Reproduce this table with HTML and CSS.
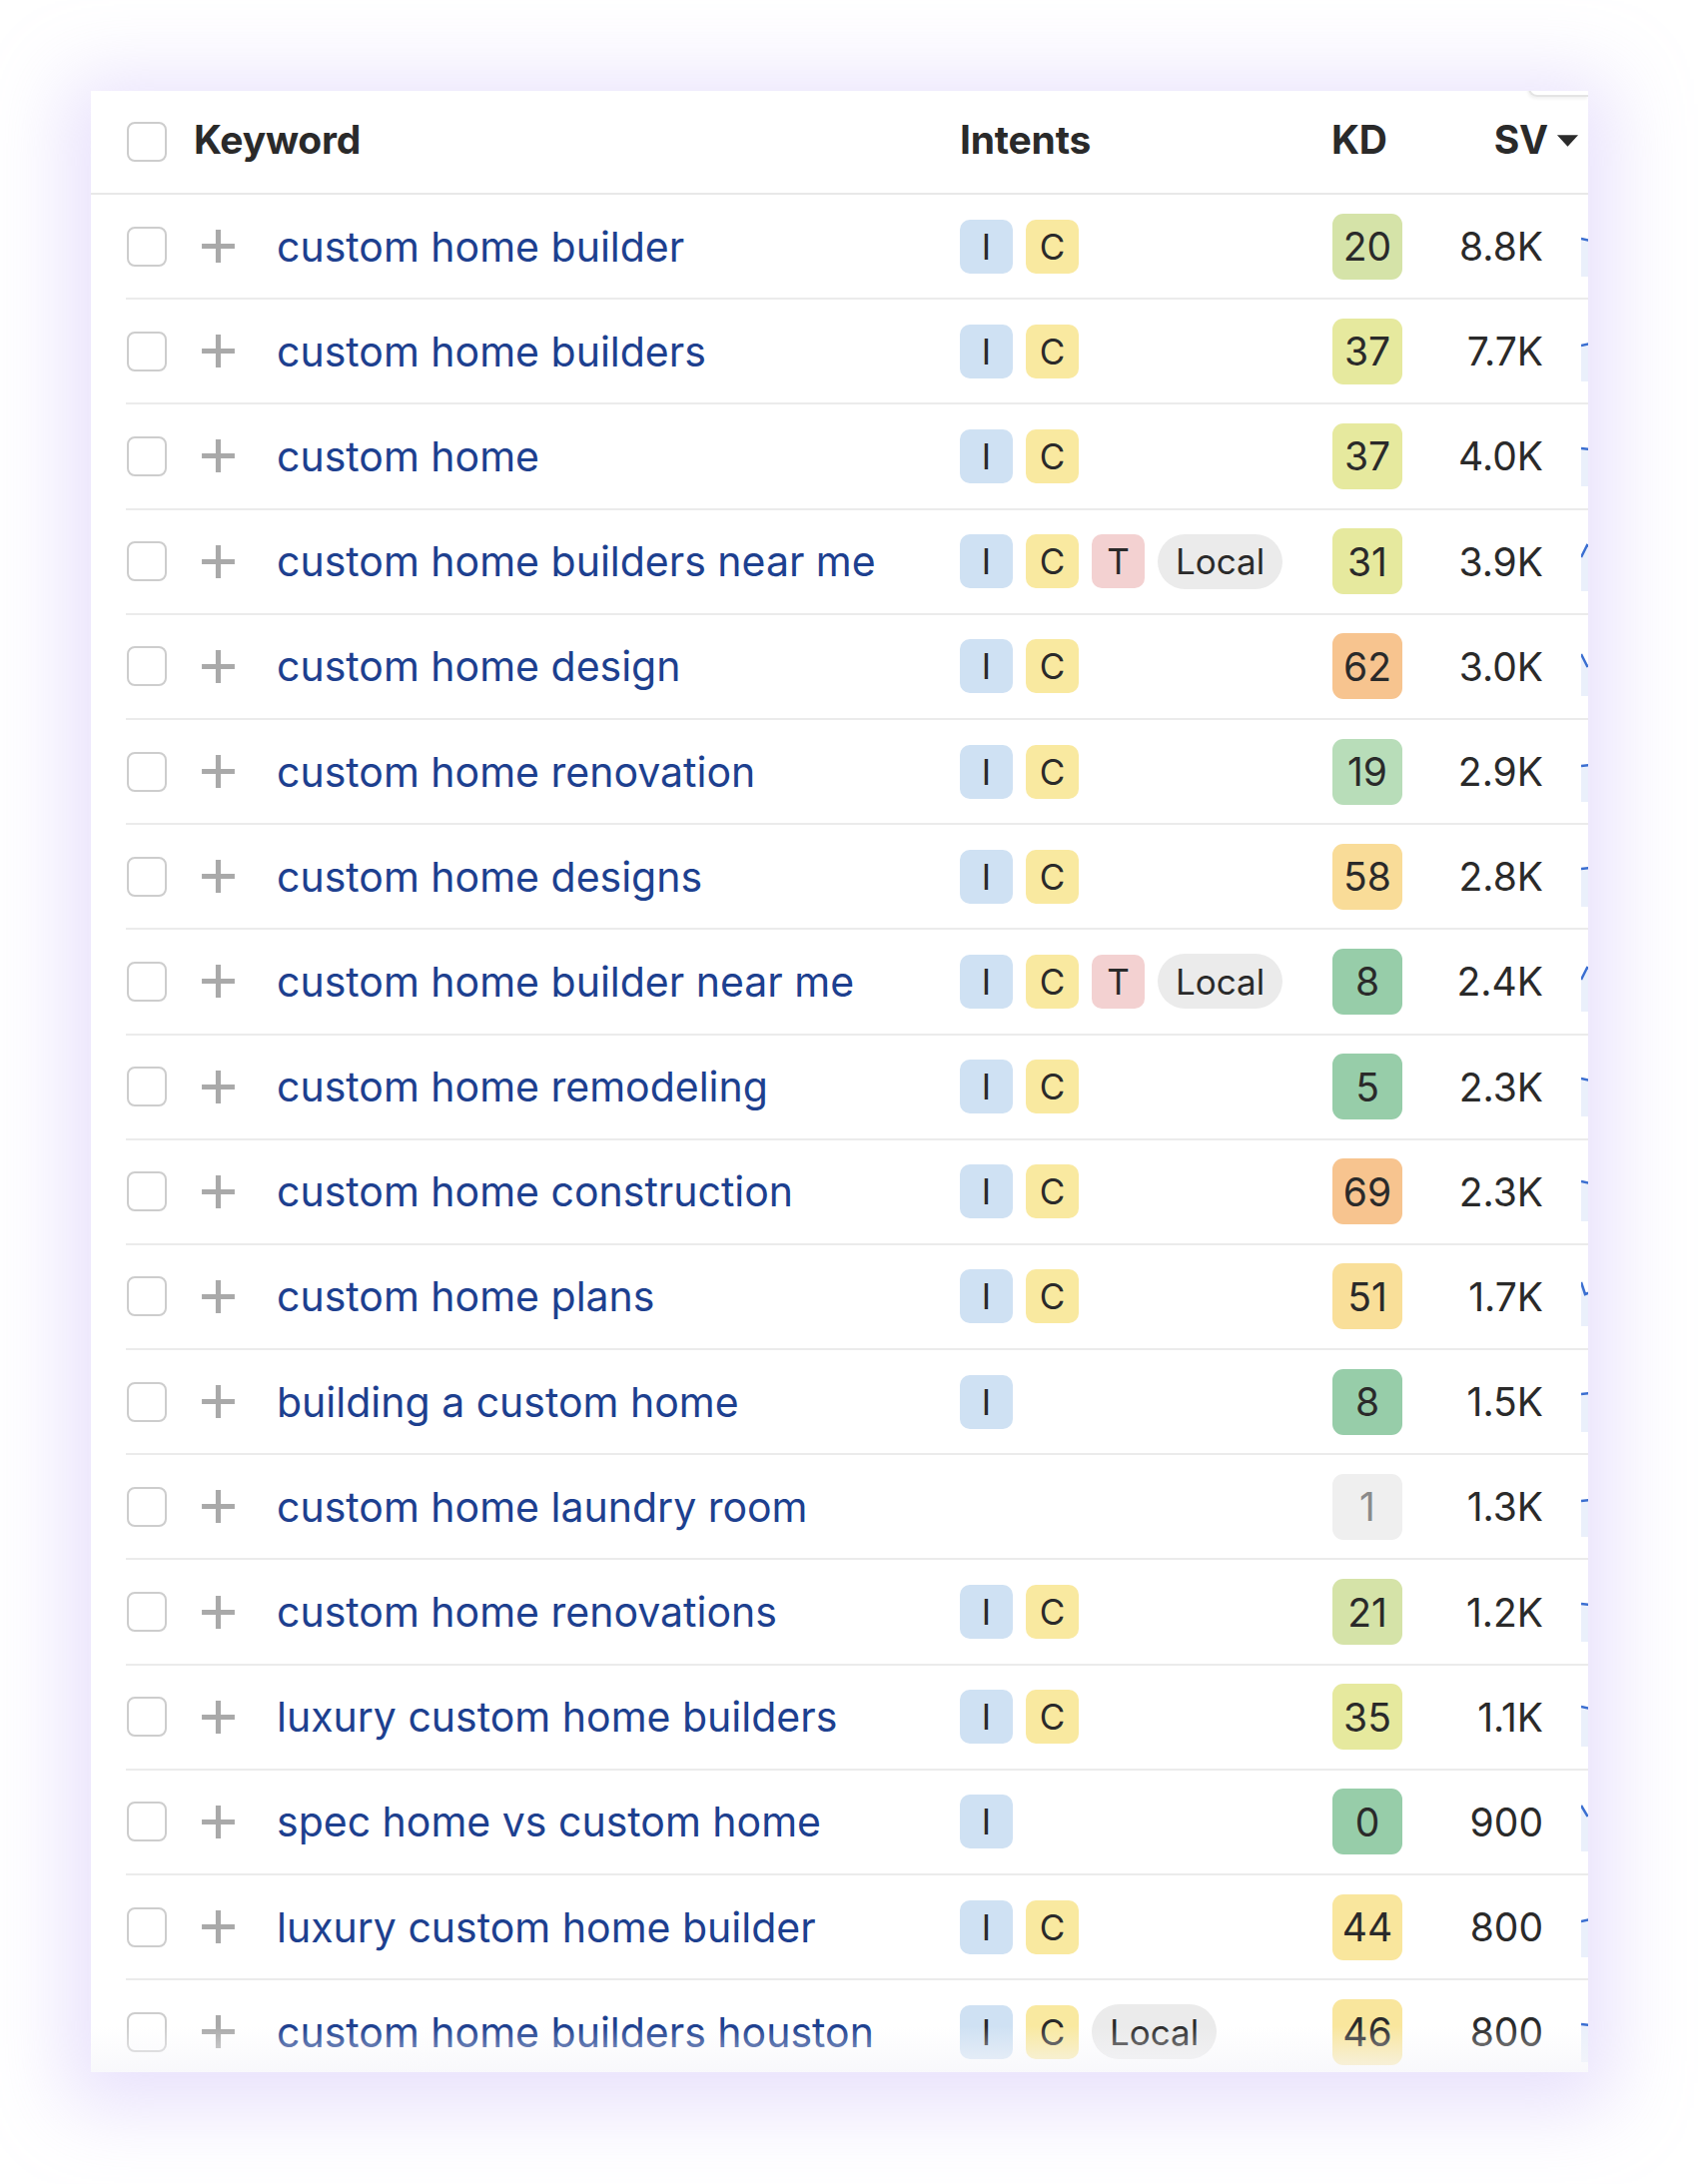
FILE: index.html
```html
<!DOCTYPE html>
<html lang="en">
<head>
<meta charset="utf-8">
<title>Keywords</title>
<link rel="stylesheet" href="styles.css">
</head>
<body>
<div class="card">
  <div class="corner-tab"></div>
  <div class="head">
    <span class="cb"></span>
    <span class="h-txt">Keyword</span>
    <span class="h-txt">Intents</span>
    <span class="h-txt">KD</span>
    <span class="h-txt h-sv">SV<svg class="sort" viewBox="0 0 24 14" width="24" height="14"><path d="M1 1h22L12 13z" fill="#2b2b2b"/></svg></span>
  </div>
  <div class="rows">
    <div class="row"><span class="cb"></span><svg class="plus" viewBox="0 0 36 36"><path d="M18 2v32M2 18h32"/></svg><span class="kw">custom home builder</span><span class="intents"><b class="it it-i">I</b><b class="it it-c">C</b></span><span class="kd kd-b">20</span><span class="sv">8.8K</span><span class="trend"><svg viewBox="0 0 120 50"><path class="area" d="M0 12L20 16L40 8L60 20L80 10L100 14L120 6V50H0z"/><path class="line" d="M0 12L20 16L40 8L60 20L80 10L100 14L120 6"/></svg></span></div>
    <div class="row"><span class="cb"></span><svg class="plus" viewBox="0 0 36 36"><path d="M18 2v32M2 18h32"/></svg><span class="kw">custom home builders</span><span class="intents"><b class="it it-i">I</b><b class="it it-c">C</b></span><span class="kd kd-c">37</span><span class="sv">7.7K</span><span class="trend"><svg viewBox="0 0 120 50"><path class="area" d="M0 14L20 10L40 18L60 8L80 16L100 12L120 9V50H0z"/><path class="line" d="M0 14L20 10L40 18L60 8L80 16L100 12L120 9"/></svg></span></div>
    <div class="row"><span class="cb"></span><svg class="plus" viewBox="0 0 36 36"><path d="M18 2v32M2 18h32"/></svg><span class="kw">custom home</span><span class="intents"><b class="it it-i">I</b><b class="it it-c">C</b></span><span class="kd kd-c">37</span><span class="sv">4.0K</span><span class="trend"><svg viewBox="0 0 120 50"><path class="area" d="M0 12L20 14L40 10L60 18L80 8L100 12L120 10V50H0z"/><path class="line" d="M0 12L20 14L40 10L60 18L80 8L100 12L120 10"/></svg></span></div>
    <div class="row"><span class="cb"></span><svg class="plus" viewBox="0 0 36 36"><path d="M18 2v32M2 18h32"/></svg><span class="kw">custom home builders near me</span><span class="intents"><b class="it it-i">I</b><b class="it it-c">C</b><b class="it it-t">T</b><b class="it it-local">Local</b></span><span class="kd kd-c">31</span><span class="sv">3.9K</span><span class="trend"><svg viewBox="0 0 120 50"><path class="area" d="M0 16L6 4L20 12L40 8L60 16L80 6L100 12L120 10V50H0z"/><path class="line" d="M0 16L6 4L20 12L40 8L60 16L80 6L100 12L120 10"/></svg></span></div>
    <div class="row"><span class="cb"></span><svg class="plus" viewBox="0 0 36 36"><path d="M18 2v32M2 18h32"/></svg><span class="kw">custom home design</span><span class="intents"><b class="it it-i">I</b><b class="it it-c">C</b></span><span class="kd kd-e">62</span><span class="sv">3.0K</span><span class="trend"><svg viewBox="0 0 120 50"><path class="area" d="M0 8L6 20L20 14L40 10L60 18L80 12L100 8L120 14V50H0z"/><path class="line" d="M0 8L6 20L20 14L40 10L60 18L80 12L100 8L120 14"/></svg></span></div>
    <div class="row"><span class="cb"></span><svg class="plus" viewBox="0 0 36 36"><path d="M18 2v32M2 18h32"/></svg><span class="kw">custom home renovation</span><span class="intents"><b class="it it-i">I</b><b class="it it-c">C</b></span><span class="kd kd-a2">19</span><span class="sv">2.9K</span><span class="trend"><svg viewBox="0 0 120 50"><path class="area" d="M0 14L20 12L40 16L60 10L80 14L100 8L120 12V50H0z"/><path class="line" d="M0 14L20 12L40 16L60 10L80 14L100 8L120 12"/></svg></span></div>
    <div class="row"><span class="cb"></span><svg class="plus" viewBox="0 0 36 36"><path d="M18 2v32M2 18h32"/></svg><span class="kw">custom home designs</span><span class="intents"><b class="it it-i">I</b><b class="it it-c">C</b></span><span class="kd kd-d2">58</span><span class="sv">2.8K</span><span class="trend"><svg viewBox="0 0 120 50"><path class="area" d="M0 12L20 10L40 14L60 8L80 16L100 10L120 12V50H0z"/><path class="line" d="M0 12L20 10L40 14L60 8L80 16L100 10L120 12"/></svg></span></div>
    <div class="row"><span class="cb"></span><svg class="plus" viewBox="0 0 36 36"><path d="M18 2v32M2 18h32"/></svg><span class="kw">custom home builder near me</span><span class="intents"><b class="it it-i">I</b><b class="it it-c">C</b><b class="it it-t">T</b><b class="it it-local">Local</b></span><span class="kd kd-a">8</span><span class="sv">2.4K</span><span class="trend"><svg viewBox="0 0 120 50"><path class="area" d="M0 18L6 6L20 12L40 8L60 14L80 6L100 10L120 8V50H0z"/><path class="line" d="M0 18L6 6L20 12L40 8L60 14L80 6L100 10L120 8"/></svg></span></div>
    <div class="row"><span class="cb"></span><svg class="plus" viewBox="0 0 36 36"><path d="M18 2v32M2 18h32"/></svg><span class="kw">custom home remodeling</span><span class="intents"><b class="it it-i">I</b><b class="it it-c">C</b></span><span class="kd kd-a">5</span><span class="sv">2.3K</span><span class="trend"><svg viewBox="0 0 120 50"><path class="area" d="M0 12L20 16L40 10L60 14L80 8L100 12L120 10V50H0z"/><path class="line" d="M0 12L20 16L40 10L60 14L80 8L100 12L120 10"/></svg></span></div>
    <div class="row"><span class="cb"></span><svg class="plus" viewBox="0 0 36 36"><path d="M18 2v32M2 18h32"/></svg><span class="kw">custom home construction</span><span class="intents"><b class="it it-i">I</b><b class="it it-c">C</b></span><span class="kd kd-e">69</span><span class="sv">2.3K</span><span class="trend"><svg viewBox="0 0 120 50"><path class="area" d="M0 10L20 14L40 8L60 16L80 10L100 14L120 8V50H0z"/><path class="line" d="M0 10L20 14L40 8L60 16L80 10L100 14L120 8"/></svg></span></div>
    <div class="row"><span class="cb"></span><svg class="plus" viewBox="0 0 36 36"><path d="M18 2v32M2 18h32"/></svg><span class="kw">custom home plans</span><span class="intents"><b class="it it-i">I</b><b class="it it-c">C</b></span><span class="kd kd-d">51</span><span class="sv">1.7K</span><span class="trend"><svg viewBox="0 0 120 50"><path class="area" d="M0 6L4 18L20 12L40 16L60 8L80 14L100 10L120 12V50H0z"/><path class="line" d="M0 6L4 18L20 12L40 16L60 8L80 14L100 10L120 12"/></svg></span></div>
    <div class="row"><span class="cb"></span><svg class="plus" viewBox="0 0 36 36"><path d="M18 2v32M2 18h32"/></svg><span class="kw">building a custom home</span><span class="intents"><b class="it it-i">I</b></span><span class="kd kd-a">8</span><span class="sv">1.5K</span><span class="trend"><svg viewBox="0 0 120 50"><path class="area" d="M0 12L20 10L40 14L60 10L80 16L100 12L120 10V50H0z"/><path class="line" d="M0 12L20 10L40 14L60 10L80 16L100 12L120 10"/></svg></span></div>
    <div class="row"><span class="cb"></span><svg class="plus" viewBox="0 0 36 36"><path d="M18 2v32M2 18h32"/></svg><span class="kw">custom home laundry room</span><span class="intents"></span><span class="kd kd-n">1</span><span class="sv">1.3K</span><span class="trend"><svg viewBox="0 0 120 50"><path class="area" d="M0 14L20 12L40 16L60 10L80 12L100 8L120 14V50H0z"/><path class="line" d="M0 14L20 12L40 16L60 10L80 12L100 8L120 14"/></svg></span></div>
    <div class="row"><span class="cb"></span><svg class="plus" viewBox="0 0 36 36"><path d="M18 2v32M2 18h32"/></svg><span class="kw">custom home renovations</span><span class="intents"><b class="it it-i">I</b><b class="it it-c">C</b></span><span class="kd kd-b">21</span><span class="sv">1.2K</span><span class="trend"><svg viewBox="0 0 120 50"><path class="area" d="M0 12L20 14L40 10L60 16L80 8L100 12L120 10V50H0z"/><path class="line" d="M0 12L20 14L40 10L60 16L80 8L100 12L120 10"/></svg></span></div>
    <div class="row"><span class="cb"></span><svg class="plus" viewBox="0 0 36 36"><path d="M18 2v32M2 18h32"/></svg><span class="kw">luxury custom home builders</span><span class="intents"><b class="it it-i">I</b><b class="it it-c">C</b></span><span class="kd kd-c">35</span><span class="sv">1.1K</span><span class="trend"><svg viewBox="0 0 120 50"><path class="area" d="M0 10L20 14L40 12L60 8L80 14L100 10L120 12V50H0z"/><path class="line" d="M0 10L20 14L40 12L60 8L80 14L100 10L120 12"/></svg></span></div>
    <div class="row"><span class="cb"></span><svg class="plus" viewBox="0 0 36 36"><path d="M18 2v32M2 18h32"/></svg><span class="kw">spec home vs custom home</span><span class="intents"><b class="it it-i">I</b></span><span class="kd kd-a">0</span><span class="sv">900</span><span class="trend"><svg viewBox="0 0 120 50"><path class="area" d="M0 4L6 14L20 10L40 16L60 8L80 12L100 10L120 14V50H0z"/><path class="line" d="M0 4L6 14L20 10L40 16L60 8L80 12L100 10L120 14"/></svg></span></div>
    <div class="row"><span class="cb"></span><svg class="plus" viewBox="0 0 36 36"><path d="M18 2v32M2 18h32"/></svg><span class="kw">luxury custom home builder</span><span class="intents"><b class="it it-i">I</b><b class="it it-c">C</b></span><span class="kd kd-c2">44</span><span class="sv">800</span><span class="trend"><svg viewBox="0 0 120 50"><path class="area" d="M0 14L20 10L40 14L60 12L80 8L100 14L120 10V50H0z"/><path class="line" d="M0 14L20 10L40 14L60 12L80 8L100 14L120 10"/></svg></span></div>
    <div class="row"><span class="cb"></span><svg class="plus" viewBox="0 0 36 36"><path d="M18 2v32M2 18h32"/></svg><span class="kw">custom home builders houston</span><span class="intents"><b class="it it-i">I</b><b class="it it-c">C</b><b class="it it-local">Local</b></span><span class="kd kd-c2">46</span><span class="sv">800</span><span class="trend"><svg viewBox="0 0 120 50"><path class="area" d="M0 12L20 14L40 10L60 12L80 16L100 10L120 12V50H0z"/><path class="line" d="M0 12L20 14L40 10L60 12L80 16L100 10L120 12"/></svg></span></div>
  </div>
  <div class="fade"></div>
</div>
</body>
</html>
```
FILE: styles.css
```css
* { box-sizing: border-box; }

html, body {
  margin: 0;
  padding: 0;
  background: #ffffff;
}

body {
  width: 1700px;
  height: 2187px;
  padding: 91px 0 0 91px;
  font-family: "Inter", "Noto Sans", sans-serif;
  color: #2b2b2b;
  overflow: hidden;
}

.card {
  position: relative;
  width: 1499px;
  height: 1984px;
  background: #ffffff;
  overflow: hidden;
  box-shadow: 0 12px 72px 24px rgba(192, 172, 246, 0.36);
}

.corner-tab {
  position: absolute;
  top: -4px;
  right: 0;
  width: 60px;
  height: 10px;
  border-left: 2px solid #e4e4e4;
  border-bottom: 2px solid #e4e4e4;
  border-bottom-left-radius: 9px;
  background: #ffffff;
  box-shadow: -1px 2px 3px rgba(0, 0, 0, 0.06);
}

.cb {
  display: block;
  width: 40px;
  height: 40px;
  border: 2.5px solid #cdcdcd;
  border-radius: 8px;
  background: #ffffff;
}

/* header */
.head {
  display: grid;
  grid-template-columns: 67px 767px 372px 70px 178px;
  align-items: center;
  height: 104px;
  padding-left: 36px;
  border-bottom: 2.5px solid #e8e8e8;
  font-weight: 700;
  font-size: 39px;
  color: #2a2a2a;
  letter-spacing: -0.2px;
}

.h-txt { margin-bottom: 6px; }

.h-sv {
  display: flex;
  justify-content: flex-end;
  align-items: center;
  gap: 8px;
}

.sort { width: 23px; height: 14px; margin-top: 4px; }

/* rows */
.rows {
  margin-left: 35px;
}

.row {
  display: grid;
  grid-template-columns: 74px 77px 684px 373px 70px 141px 200px;
  align-items: center;
  height: 105.2px;
  border-bottom: 2.5px solid #ebebeb;
  width: 1660px;
}

.row .cb { margin-left: 1px; }

.plus {
  display: block;
  width: 37px;
  height: 37px;
  fill: none;
  stroke: #a9a9a9;
  stroke-width: 5;
}

.kw {
  font-size: 41px;
  color: #1d408f;
  white-space: nowrap;
  letter-spacing: 0;
}

.intents {
  display: flex;
  align-items: center;
  gap: 13px;
}

.it {
  display: flex;
  align-items: center;
  justify-content: center;
  width: 53px;
  height: 54px;
  border-radius: 10px;
  font-weight: 400;
  font-size: 35px;
  color: #2a2a2a;
}

.it-i { background: #cfe1f3; }
.it-c { background: #f9e9a0; }
.it-t { background: #f3d1d1; }
.it-local {
  width: 125px;
  height: 55px;
  border-radius: 28px;
  background: #ebebeb;
}

.kd {
  display: flex;
  align-items: center;
  justify-content: center;
  width: 70px;
  height: 66px;
  border-radius: 11px;
  font-size: 39px;
  color: #2a2a2a;
}

.kd-a  { background: #97cda9; }
.kd-a2 { background: #b8ddb9; }
.kd-b  { background: #d5e3a8; }
.kd-c  { background: #e6e99e; }
.kd-c2 { background: #f9e69d; }
.kd-d  { background: #f9df99; }
.kd-d2 { background: #f9dc98; }
.kd-e  { background: #f7c48f; }
.kd-n  { background: #efefef; color: #8a8a8a; }

.sv {
  text-align: right;
  font-size: 39px;
  color: #2a2a2a;
}

.trend {
  display: block;
  padding-left: 38px;
  padding-top: 10px;
}

.trend svg {
  display: block;
  width: 120px;
  height: 50px;
}

.trend .area { fill: #eaf0fb; stroke: none; }
.trend .line { fill: none; stroke: #3b6fd1; stroke-width: 2.5; }

.fade {
  position: absolute;
  left: 0;
  right: 0;
  bottom: 0;
  height: 46px;
  background: linear-gradient(to bottom, rgba(246, 246, 250, 0), rgba(246, 246, 250, 0.75));
  pointer-events: none;
}
```
